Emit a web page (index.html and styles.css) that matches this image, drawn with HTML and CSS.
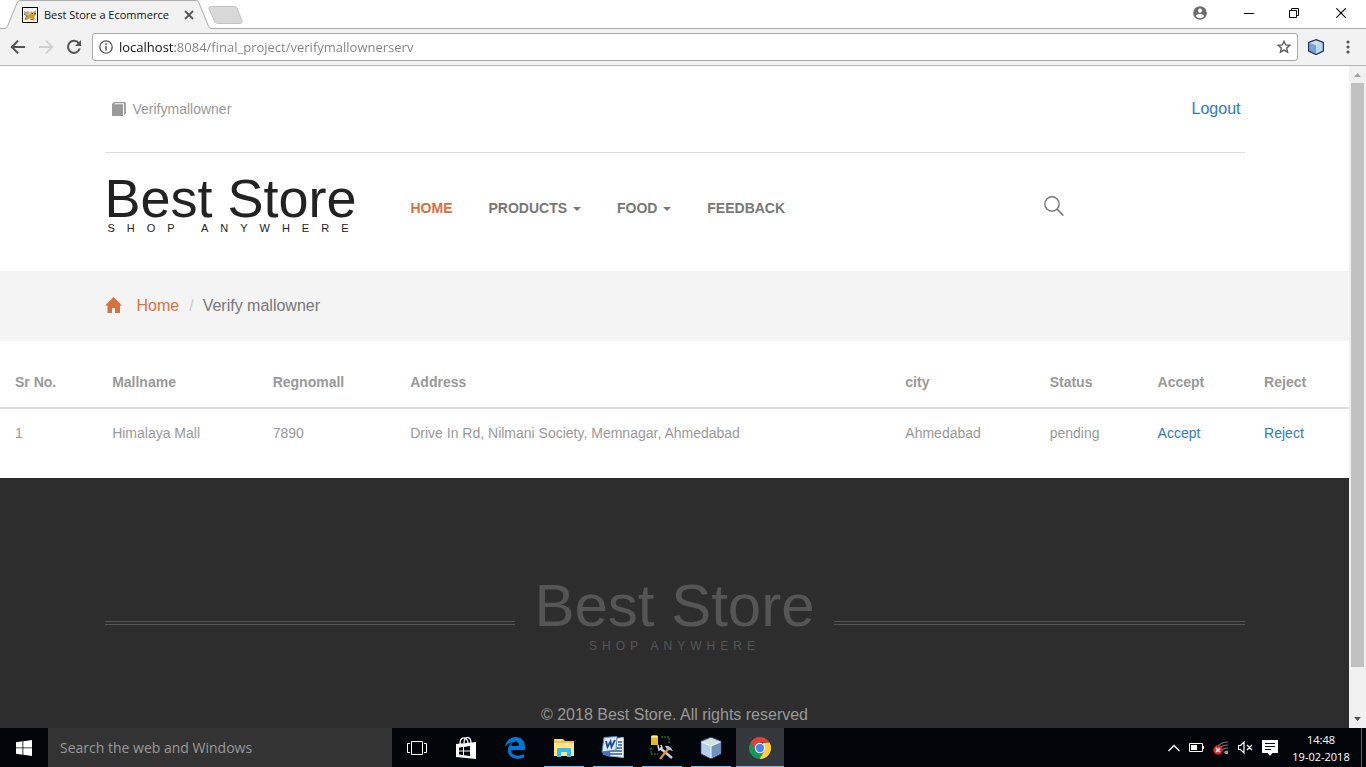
FILE: index.html
```html
<!DOCTYPE html>
<html lang="en">
<head>
<meta charset="utf-8">
<title>Best Store a Ecommerce</title>
<link rel="stylesheet" href="styles.css">
</head>
<body>
<header class="tabstrip">
  <div class="tab">
    <svg class="tab-shape" width="206" height="29" viewBox="0 0 206 29"><path d="M0 29V28.500Q2 28 3 25L12 3Q13 .500 15 .500H191Q193 .500 194 3L203 25Q204 28 206 28.500V29Z" fill="#f2f2f2"/><path d="M0 28.500Q2 28 3 25L12 3Q13 .500 15 .500H191Q193 .500 194 3L203 25Q204 28 206 28.500" fill="none" stroke="#adadad"/></svg>
    <svg class="favicon" width="16" height="16" viewBox="0 0 16 16"><path d="M.500.500h15v15H.500z" fill="#f4f4f0" stroke="#000"/><path d="M2 13L5 10L5 8L8 7L9 4L10 5H12L14 3V8L12 10L14 13L11 12L8 11L5 13Z" fill="#d29b3a"/><path d="M2 4L4 5L6 4L8 6L5 8L2 7Z" fill="#aaa89f"/><path d="M2 7L5 9L3 12M8 12L12 13" stroke="#7b6a48" fill="none"/><path d="M10 6.500h1M12.500 6.500h1" stroke="#222"/></svg>
    <span class="tab-title">Best Store a Ecommerce</span>
    <button class="icon-button" aria-label="Close tab"><svg width="10" height="10" viewBox="0 0 10 10"><path d="M1 1L9 9M9 1L1 9" stroke="#555" stroke-width="1.800"/></svg></button>
  </div>
  <button class="icon-button new-tab" aria-label="New tab"><svg width="36" height="18" viewBox="0 0 36 18"><path d="M3 .500H26Q28 .500 29 2L34 15Q35 17.500 32 17.500H10Q8 17.500 7 16L1 3Q0 .500 3 .500Z" fill="#d8d8d8" stroke="#c3c3c3"/></svg></button>
  <div class="window-controls">
    <button class="icon-button" aria-label="User"><svg width="14" height="14" viewBox="0 0 14 14"><circle cx="7" cy="7" r="6.800" fill="#6b6b6b"/><circle cx="7" cy="4.700" r="2.100" fill="#fff"/><path d="M2.800 10Q3.300 8 7 8T11.200 10Q9.700 12.200 7 12.200T2.800 10Z" fill="#fff"/></svg></button>
    <button class="icon-button" aria-label="Minimize"><svg width="10" height="10" viewBox="0 0 10 10"><path d="M0 5.500H10" stroke="#000"/></svg></button>
    <button class="icon-button" aria-label="Restore"><svg width="10" height="10" viewBox="0 0 10 10"><path d="M.500 2.500H7.500V9.500H.500ZM2.500 2.500V.500H9.500V7.500H7.500" fill="none" stroke="#000"/></svg></button>
    <button class="icon-button" aria-label="Close"><svg width="10" height="10" viewBox="0 0 10 10"><path d="M.300.300L9.700 9.700M9.700.300L.300 9.700" stroke="#000" stroke-width="1.100"/></svg></button>
  </div>
</header>
<div class="toolbar">
  <button class="icon-button" aria-label="Back"><svg width="16" height="16" viewBox="0 0 16 16"><path d="M15 8H2M8 1.800L1.800 8L8 14.200" fill="none" stroke="#555" stroke-width="2"/></svg></button>
  <button class="icon-button" aria-label="Forward"><svg width="16" height="16" viewBox="0 0 16 16"><path d="M1 8H14M8 1.800L14.200 8L8 14.200" fill="none" stroke="#d0d0d0" stroke-width="2"/></svg></button>
  <button class="icon-button" aria-label="Reload"><svg width="16" height="16" viewBox="0 0 16 16"><path d="M12.800 4.200A6 6 0 1 0 13.800 9.500" fill="none" stroke="#555" stroke-width="2"/><path d="M15 1V7H9Z" fill="#555"/></svg></button>
  <div class="address">
    <svg width="14" height="14" viewBox="0 0 14 14"><circle cx="7" cy="7" r="6.200" fill="none" stroke="#555" stroke-width="1.300"/><path d="M7 6V10.500M7 3.300V4.900" stroke="#555" stroke-width="1.500"/></svg>
    <input class="url" type="text" aria-label="Address" value="localhost:8084/final_project/verifymallownerserv">
    <button class="icon-button" aria-label="Bookmark this page"><svg width="14" height="14" viewBox="0 0 14 14"><path d="M7 1.300L8.700 5L12.800 5.400L9.700 8.100L10.600 12.200L7 10.100L3.400 12.200L4.300 8.100L1.200 5.400L5.300 5Z" fill="none" stroke="#555" stroke-width="1.300"/></svg></button>
  </div>
  <button class="icon-button" aria-label="Extension"><svg width="16" height="16" viewBox="0 0 16 16"><path d="M8 .700L15.300 3.500V12L8 15.500L.700 12V3.500Z" fill="#8ab0e4" stroke="#1f2858" stroke-width="1.300"/><path d="M8 1.500L14.500 4L8 6.500L1.500 4Z" fill="#c9e0e8"/><path d="M8 6.500L14.500 4V11.600L8 14.700Z" fill="#b9d9ec"/><path d="M1.500 4L8 6.500V14.700L1.500 11.600Z" fill="#799ed8"/></svg></button>
  <button class="icon-button menu" aria-label="Menu"><svg width="4" height="14" viewBox="0 0 4 14"><g fill="#555"><circle cx="2" cy="2" r="1.600"/><circle cx="2" cy="7" r="1.600"/><circle cx="2" cy="12" r="1.600"/></g></svg></button>
</div>
<div class="viewport">
  <main class="page">
    <div class="container topbar">
      <span class="account"><svg width="14" height="14" viewBox="0 0 14 14"><path d="M0 2L2 0H13V12H12V1.300H3L2 2.300H11V14H0Z" fill="#999"/><path d="M13.300.500V11.500L12.300 13" fill="none" stroke="#999"/></svg>Verifymallowner</span>
      <a class="logout" href="#">Logout</a>
    </div>
    <div class="container masthead">
      <a class="brand" href="#"><span class="brand-name">Best Store</span><span class="brand-tag">SHOP ANYWHERE</span></a>
      <nav class="nav">
        <a class="active" href="#">HOME</a>
        <a href="#">PRODUCTS <span class="caret"></span></a>
        <a href="#">FOOD <span class="caret"></span></a>
        <a href="#">FEEDBACK</a>
      </nav>
      <button class="icon-button search" aria-label="Search"><svg width="20" height="20" viewBox="0 0 20 20"><circle cx="8" cy="8" r="7.200" fill="none" stroke="#777" stroke-width="1.400"/><path d="M13 13L19.300 19.500" stroke="#777" stroke-width="1.700"/></svg></button>
    </div>
    <div class="crumb-band">
      <div class="container breadcrumb">
        <svg class="home-icon" width="17" height="16" viewBox="0 0 17 16"><path d="M8.500 0L17 8.500H15V16H10V11H7V16H2.500V8.500H0Z" fill="#d8703f"/></svg>
        <a href="#">Home</a><span class="slash">/</span><span>Verify mallowner</span>
      </div>
    </div>
    <table class="requests">
      <colgroup><col class="col-serial"><col class="col-mall"><col class="col-regno"><col class="col-address"><col class="col-city"><col class="col-status"><col class="col-accept"><col></colgroup>
      <thead><tr><th>Sr No.</th><th>Mallname</th><th>Regnomall</th><th>Address</th><th>city</th><th>Status</th><th>Accept</th><th>Reject</th></tr></thead>
      <tbody><tr><td>1</td><td>Himalaya Mall</td><td>7890</td><td>Drive In Rd, Nilmani Society, Memnagar, Ahmedabad</td><td>Ahmedabad</td><td>pending</td><td><a href="#">Accept</a></td><td><a href="#">Reject</a></td></tr></tbody>
    </table>
    <footer class="footer">
      <div class="container footer-brand">
        <span class="rule"></span>
        <div class="footer-logo"><div class="footer-name">Best Store</div><div class="footer-tag">SHOP ANYWHERE</div></div>
        <span class="rule"></span>
      </div>
      <p class="copyright">© 2018 Best Store. All rights reserved</p>
    </footer>
  </main>
  <div class="scrollbar">
    <svg width="17" height="17" viewBox="0 0 17 17"><path d="M5 11L8.500 7L12 11Z" fill="#a3a3a3"/></svg>
    <div class="track"><div class="thumb"></div></div>
    <svg width="17" height="17" viewBox="0 0 17 17"><path d="M5 6L8.500 10L12 6Z" fill="#505050"/></svg>
  </div>
</div>
<div class="taskbar">
  <button class="icon-button start" aria-label="Start"><svg width="16" height="16" viewBox="0 0 16 16"><path d="M0 2.300L6.500 1.300V7.500H0ZM7.300 1.200L16 0V7.500H7.300ZM0 8.300H6.500V14.700L0 13.700ZM7.300 8.300H16V16L7.300 14.800Z" fill="#fff"/></svg></button>
  <input class="task-search" type="text" aria-label="Search the web and Windows" placeholder="Search the web and Windows">
  <div class="apps">
    <button class="app" aria-label="Task view"><svg width="20" height="16" viewBox="0 0 20 16"><path d="M4.500 1.500H15.500V14.500H4.500ZM3 3.500H.500V12.500H3M17 3.500H19.500V12.500H17" fill="none" stroke="#fff"/></svg></button>
    <button class="app" aria-label="Store"><svg width="22" height="24" viewBox="0 0 22 24"><path d="M1 8L21 6V23L1 21Z" fill="#fff"/><path d="M5 8C5 0 12 0 13 7M9 7C9-1 16 0 16 7" fill="none" stroke="#fff" stroke-width="1.300"/><path d="M4 11.500L8 11V14.500H4ZM9 10.900L15 10V14.500H9ZM4 15.500H8V19L4 18.600ZM9 15.500H15V20L9 19.200Z" fill="#02050a"/></svg></button>
    <button class="app" aria-label="Edge"><svg width="20" height="22" viewBox="0 0 20 22"><path d="M0 10C1 4 5 0 10.500 0C17 0 20 5 20 10V13H6C6 17 10 19 14 18.500Q17 18 19 17V20.500C15 22.500 10 22.500 6.500 20C1 16 2 9 8 5C4 6 1.500 8 0 10ZM6.200 9H14C14 6 12.500 4.500 10.500 4.500S6.500 6 6.200 9Z" fill="#0078d7"/></svg></button>
    <button class="app running" aria-label="File Explorer"><svg width="22" height="20" viewBox="0 0 22 20"><path d="M1 1H10L12 3H21V18H1Z" fill="#f2c24d"/><path d="M1 5H21V18H1Z" fill="#ffe58d"/><path d="M2 2H9" stroke="#fff3bd"/><path d="M4 11Q4 10 5 10H17Q18 10 18 11V19H14V14H8V19H4Z" fill="#35b9ee"/></svg></button>
    <button class="app running" aria-label="Word"><svg width="24" height="23" viewBox="0 0 24 23"><path d="M9 3L22.500 1.500V21.500L9 20Z" fill="#eef3fc" stroke="#9db6dc"/><path d="M17 6H21M17 9H21M15 12H21M9 15H21M9 18H21" stroke="#315b9f" stroke-width="1.400"/><path d="M3 1.500L16 .500L15 14L1 16Z" fill="#dfe9f8" stroke="#5c83bd"/><path d="M5 5L6.500 11L9.500 5.500L10.500 11L14 4" fill="none" stroke="#1d4b94" stroke-width="1.800"/><path d="M1 16L9 15V21L2 19Z" fill="#4573b6"/></svg></button>
    <button class="app running" aria-label="Configuration tool"><svg width="24" height="25" viewBox="0 0 24 25"><path d="M1 1H8V10H1Z" fill="#edb627"/><ellipse cx="4.500" cy="1.500" rx="3.500" ry="1.300" fill="#ffe58b"/><path d="M11 2H19V9M1 13V19H8" fill="none" stroke="#2c9b2f" stroke-dasharray="2 1"/><path d="M10 13L22 23" stroke="#c9d0d8" stroke-width="2.500"/><path d="M19 13L10 24" stroke="#d29243" stroke-width="2.300"/><path d="M15 11Q20 10 23 16L19 15L16 13Z" fill="#bac4cf"/><path d="M8 10L9 15L12 13L11 10" fill="none" stroke="#d8dee5" stroke-width="1.500"/></svg></button>
    <button class="app running" aria-label="NetBeans"><svg width="22" height="22" viewBox="0 0 22 22"><path d="M11 0L21 4V17L11 22L1 17V4Z" fill="#9bb9df" stroke="#2d3960"/><path d="M11 1L20.500 5L11 9L1.500 5Z" fill="#cfe2dc"/><path d="M1.500 5L11 9V21L1.500 16.500Z" fill="#b4cced"/><path d="M11 9L20.500 5V16.500L11 21Z" fill="#6e93bd"/><path d="M1.500 5L11 9L20.500 5M11 9V21" fill="none" stroke="#f2f8ff"/></svg></button>
    <button class="app running selected" aria-label="Chrome"><svg width="22" height="22" viewBox="0 0 22 22"><path d="M1.500 5.500A11 11 0 0 1 20.500 5.500H11L6.500 13.500Z" fill="#dc4437"/><path d="M1.500 5.500A11 11 0 0 0 10.500 22L15.500 13.500H6.500Z" fill="#15995b"/><path d="M20.500 5.500A11 11 0 0 1 10.500 22L15.500 13.500L14 6Z" fill="#ffce46"/><circle cx="11" cy="11" r="5.200" fill="#fff"/><circle cx="11" cy="11" r="4.200" fill="#4587ed"/></svg></button>
  </div>
  <div class="tray">
    <svg width="12" height="8" viewBox="0 0 12 8"><path d="M.500 7L6 1.500L11.500 7" fill="none" stroke="#fff" stroke-width="1.300"/></svg>
    <svg width="15" height="9" viewBox="0 0 15 9"><path d="M.500.500H13.500V8.500H.500Z" fill="none" stroke="#fff"/><path d="M2 2H8V7H2ZM14 3H15V6H14Z" fill="#fff"/></svg>
    <svg width="16" height="14" viewBox="0 0 16 14"><path d="M4 6Q8 1 15 1M6 8Q9 4 15 4M8 10Q10 7 15 7M11 12Q12 10 15 10" fill="none" stroke="#777" stroke-width="1.200"/><path d="M12 10H15V13H12Z" fill="#999"/><circle cx="5" cy="9" r="4.700" fill="#df2530"/><path d="M3 7L7 11M7 7L3 11" stroke="#fff" stroke-width="1.300"/></svg>
    <svg width="15" height="13" viewBox="0 0 15 13"><path d="M.500 4.500H2.500L6 1V12L2.500 8.500H.500ZM9 4L14 9M14 4L9 9" fill="none" stroke="#fff" stroke-width="1.200"/></svg>
    <svg width="16" height="16" viewBox="0 0 16 16"><path d="M0 0H16V13H10.500L8 16L5.500 13H0Z" fill="#fff"/><path d="M3 3.500H13M3 6.500H13M3 9.500H9" stroke="#02050a"/></svg>
    <div class="clock"><span>14:48</span><span>19-02-2018</span></div>
    <span class="show-desktop"></span>
  </div>
</div>
</body>
</html>
```
FILE: styles.css
```css
* { box-sizing: border-box; }
body {
  margin: 0;
  height: 100vh;
  display: flex;
  flex-direction: column;
  overflow: hidden;
  background: #fff;
  font-family: "Liberation Sans", Arial, sans-serif;
  font-size: 14px;
  line-height: 20px;
  color: #999;
}
svg { display: block; flex: none; }
a { color: #337ab7; text-decoration: none; }
.icon-button {
  display: flex;
  align-items: center;
  justify-content: center;
  padding: 0;
  border: 0;
  background: none;
}

/* Browser window */
.tabstrip {
  display: flex;
  flex: none;
  height: 29px;
  padding-left: 5px;
  border-bottom: 1px solid #adadad;
}
.tab {
  position: relative;
  display: flex;
  align-items: center;
  width: 206px;
  height: 29px;
  padding: 0 17px;
}
.tab-shape { position: absolute; left: 0; top: 0; }
.favicon, .tab-title, .tab .icon-button { position: relative; }
.tab-title {
  flex: 1;
  margin-left: 6px;
  overflow: hidden;
  white-space: nowrap;
  font: 11px/16px "Open Sans", sans-serif;
  color: #111;
}
.new-tab { width: 36px; height: 30px; margin-left: -3px; }
.window-controls {
  display: grid;
  grid-template-columns: 52px 46px 44px 50px;
  height: 26px;
  margin-left: auto;
}
.toolbar {
  display: flex;
  align-items: center;
  flex: none;
  gap: 12px;
  height: 37px;
  padding: 0 16px 0 10px;
  background: #f2f2f2;
  border-bottom: 1px solid #b5b5b5;
}
.address {
  display: flex;
  align-items: center;
  flex: 1;
  gap: 6px;
  height: 28px;
  margin: 0 -2px;
  padding: 0 6px;
  background: #fff;
  border: 1px solid #a9a9a9;
  border-radius: 3px;
}
.url {
  flex: 1;
  min-width: 0;
  padding: 0;
  border: 0;
  outline: 0;
  font: 13px/20px "Open Sans", sans-serif;
  color: transparent;
  background: linear-gradient(90deg, #111 56px, #808080 56px);
  -webkit-background-clip: text;
  background-clip: text;
}
.menu { margin-left: 10px; }

/* Page and scrollbar */
.viewport { display: flex; flex: 1; min-height: 0; }
.page { flex: 1; min-width: 0; overflow: hidden; display: flex; flex-direction: column; }
.container { width: 100%; max-width: 1140px; margin: 0 auto; }
.scrollbar { display: flex; flex-direction: column; width: 17px; background: #f1f1f1; }
.track { flex: 1; padding: 0 2px; }
.thumb { height: 93%; background: #c1c1c1; }

.topbar {
  display: flex;
  align-items: center;
  justify-content: space-between;
  height: 87px;
  padding: 0 4px 0 7px;
  border-bottom: 1px solid #ddd;
}
.account { display: flex; align-items: center; gap: 7px; }
.logout { font-size: 16px; }
.masthead { display: flex; align-items: flex-start; padding: 20px 181px 37px 0; }
.brand { display: flex; flex-direction: column; color: #222; white-space: nowrap; }
.brand-name { font-size: 54px; line-height: 50px; }
.brand-tag { padding-left: 3px; font-size: 11px; line-height: 11px; letter-spacing: 12px; }
.nav { display: flex; gap: 36px; margin: 25px 0 0 50px; font-weight: bold; }
.nav a { color: #777; }
.nav .active { color: #d8703f; }
.caret {
  display: inline-block;
  margin-left: 2px;
  vertical-align: middle;
  border: 4px solid transparent;
  border-top-color: #777;
  border-bottom: 0;
}
.search { margin: 23px 0 0 auto; }
.crumb-band { background: #f4f4f4; }
.breadcrumb { display: flex; align-items: center; height: 70px; font-size: 16px; color: #777; }
.home-icon { margin-bottom: 3px; }
.breadcrumb a { margin-left: 15px; color: #d8703f; }
.slash { margin: 0 9px 0 10px; color: #ccc; }

.requests { width: 100%; margin: 16px 0 20px; border-collapse: collapse; table-layout: fixed; }
.requests th, .requests td { padding: 15px; text-align: left; white-space: nowrap; }
.requests tbody td { padding-top: 14px; }
.requests thead th { border-bottom: 2px solid #ddd; }
.col-serial { width: 7.2%; }
.col-mall { width: 11.9%; }
.col-regno { width: 10.2%; }
.col-address { width: 36.7%; }
.col-city { width: 10.7%; }
.col-status { width: 8%; }
.col-accept { width: 7.9%; }

.footer { flex: 1; padding-top: 98px; background: #2d2d2d; text-align: center; }
.footer-brand { display: flex; align-items: center; gap: 19px; }
.rule { flex: 1; height: 4px; margin-top: 13px; border: solid #555; border-width: 1px 0; }
.footer-logo { color: #555; white-space: nowrap; }
.footer-name { font-size: 60px; line-height: 60px; }
.footer-tag { font-size: 12px; line-height: 20px; letter-spacing: 5px; }
.copyright { margin: 47px 0 0; font-size: 16px; line-height: 24px; }

/* Taskbar */
.taskbar { display: flex; flex: none; height: 39px; background: #02050a; }
.start { width: 48px; }
.task-search {
  width: 344px;
  padding: 0 12px;
  border: 0;
  border-radius: 0;
  background: #333;
  font: 14px/20px "Open Sans", sans-serif;
}
.task-search::placeholder { color: #999; opacity: 1; }
.apps { display: flex; gap: 1px; margin-left: 1px; }
.app {
  display: flex;
  align-items: center;
  justify-content: center;
  width: 48px;
  padding: 0;
  border: 0;
  background: none;
}
.running {
  background: linear-gradient(#76b9ed, #76b9ed) bottom / 40px 1px no-repeat;
}
.selected { background-color: #34373b; background-size: 48px 1px; }
.tray { display: flex; align-items: center; gap: 9px; margin-left: auto; }
.clock {
  display: flex;
  flex-direction: column;
  width: 68px;
  text-align: center;
  font: 11px/17px "Open Sans", sans-serif;
  color: #fff;
}
.show-desktop { width: 5px; height: 39px; margin-left: -3px; border-left: 1px solid #666; }
```
